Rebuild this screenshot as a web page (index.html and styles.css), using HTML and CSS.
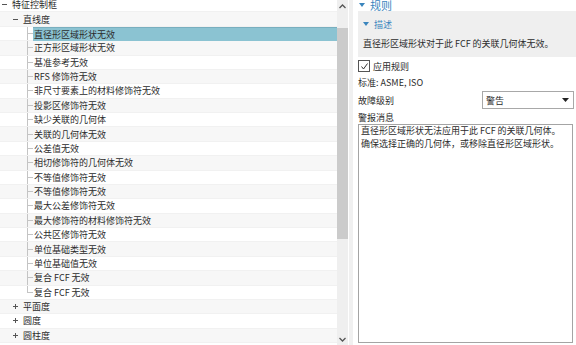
FILE: index.html
```html
<!DOCTYPE html>
<html>
<head>
  <meta charset="UTF-8">
  <title>规则</title>
  <link rel="stylesheet" href="styles.css">
</head>
<body>
  <div class="app">
    <div class="tree-pane">
      <div class="tree">
        <div class="row lvl0"><span class="toggle"><svg width="7" height="7"><line x1="1" y1="3.5" x2="6" y2="3.5"/></svg></span><span class="label">特征控制框</span></div>
        <div class="row lvl1"><span class="toggle"><svg width="7" height="7"><line x1="1" y1="3.5" x2="6" y2="3.5"/></svg></span><span class="label">直线度</span></div>
        <div class="row lvl2 selected"><span class="branch"></span><span class="label">直径形区域形状无效</span></div>
        <div class="row lvl2"><span class="branch"></span><span class="label">正方形区域形状无效</span></div>
        <div class="row lvl2"><span class="branch"></span><span class="label">基准参考无效</span></div>
        <div class="row lvl2"><span class="branch"></span><span class="label">RFS 修饰符无效</span></div>
        <div class="row lvl2"><span class="branch"></span><span class="label">非尺寸要素上的材料修饰符无效</span></div>
        <div class="row lvl2"><span class="branch"></span><span class="label">投影区修饰符无效</span></div>
        <div class="row lvl2"><span class="branch"></span><span class="label">缺少关联的几何体</span></div>
        <div class="row lvl2"><span class="branch"></span><span class="label">关联的几何体无效</span></div>
        <div class="row lvl2"><span class="branch"></span><span class="label">公差值无效</span></div>
        <div class="row lvl2"><span class="branch"></span><span class="label">相切修饰符的几何体无效</span></div>
        <div class="row lvl2"><span class="branch"></span><span class="label">不等值修饰符无效</span></div>
        <div class="row lvl2"><span class="branch"></span><span class="label">不等值修饰符无效</span></div>
        <div class="row lvl2"><span class="branch"></span><span class="label">最大公差修饰符无效</span></div>
        <div class="row lvl2"><span class="branch"></span><span class="label">最大修饰符的材料修饰符无效</span></div>
        <div class="row lvl2"><span class="branch"></span><span class="label">公共区修饰符无效</span></div>
        <div class="row lvl2"><span class="branch"></span><span class="label">单位基础类型无效</span></div>
        <div class="row lvl2"><span class="branch"></span><span class="label">单位基础值无效</span></div>
        <div class="row lvl2"><span class="branch"></span><span class="label">复合 FCF 无效</span></div>
        <div class="row lvl2 last"><span class="branch"></span><span class="label">复合 FCF 无效</span></div>
        <div class="row lvl1"><span class="toggle"><svg width="7" height="7"><line x1="1" y1="3.5" x2="6" y2="3.5"/><line x1="3.5" y1="1" x2="3.5" y2="6"/></svg></span><span class="label">平面度</span></div>
        <div class="row lvl1"><span class="toggle"><svg width="7" height="7"><line x1="1" y1="3.5" x2="6" y2="3.5"/><line x1="3.5" y1="1" x2="3.5" y2="6"/></svg></span><span class="label">圆度</span></div>
        <div class="row lvl1"><span class="toggle"><svg width="7" height="7"><line x1="1" y1="3.5" x2="6" y2="3.5"/><line x1="3.5" y1="1" x2="3.5" y2="6"/></svg></span><span class="label">圆柱度</span></div>
      </div>
      <div class="scrollbar">
        <div class="arrow"><svg width="9" height="6"><polyline points="1.5,5 4.5,2 7.5,5"/></svg></div>
        <div class="track"><div class="thumb"></div></div>
        <div class="arrow"><svg width="9" height="6"><polyline points="1.5,1 4.5,4 7.5,1"/></svg></div>
      </div>
    </div>
    <div class="splitter"></div>
    <div class="rule-pane">
      <div class="rule-title"><svg class="caret" width="6" height="4"><polygon points="0,0 6,0 3,4"/></svg>规则</div>
      <div class="desc-box">
        <div class="desc-title"><svg class="caret" width="6" height="4"><polygon points="0,0 6,0 3,4"/></svg>描述</div>
        <div class="desc-text">直径形区域形状对于此 FCF 的关联几何体无效。</div>
      </div>
      <div class="field check-row">
        <span class="checkbox"><svg width="9" height="9"><polyline points="1.5,4.5 3.5,7 7.5,1.5"/></svg></span>
        <span>应用规则</span>
      </div>
      <div class="field">标准: ASME, ISO</div>
      <div class="field level-row">
        <span>故障级别</span>
        <div class="select"><span>警告</span><svg width="7" height="4"><polygon points="0,0 7,0 3.5,4"/></svg></div>
      </div>
      <div class="field">警报消息</div>
      <div class="message">直径形区域形状无法应用于此 FCF 的关联几何体。<br>确保选择正确的几何体，或移除直径形区域形状。</div>
    </div>
  </div>
</body>
</html>
```

FILE: styles.css
```css
body {
  margin: 0;
  font-family: "Noto Sans CJK SC", "Liberation Sans", sans-serif;
  font-size: 9px;
  color: #2b2b2b;
  background-color: white;
  overflow: hidden;
}
.app {
  display: flex;
  height: 345px;
  width: 576px;
  overflow: hidden;
}
.tree-pane {
  display: flex;
  width: 348px;
  flex-shrink: 0;
}
.tree {
  width: 337px;
  margin-top: -2px;
}
.row {
  display: flex;
  align-items: stretch;
  height: 14.375px;
  box-sizing: border-box;
  border-bottom: 1px solid #f1f1f1;
  background-color: white;
}
.row:nth-child(even) {
  background-color: #f7f7f7;
}
.label {
  display: flex;
  align-items: center;
  flex: 1;
  padding-left: 1px;
  white-space: nowrap;
}
.toggle {
  display: flex;
  align-items: center;
  width: 10px;
}
.toggle svg {
  stroke: #555;
  stroke-width: 1;
}
.lvl0 {
  padding-left: 1px;
}
.lvl1 {
  padding-left: 12px;
}
.lvl2 {
  padding-left: 27px;
}
.branch {
  width: 6px;
  background:
    linear-gradient(#c4c4c4, #c4c4c4) 0 0 / 1px 100% no-repeat,
    linear-gradient(#c4c4c4, #c4c4c4) 0 50% / 6px 1px no-repeat;
}
.last .branch {
  background:
    linear-gradient(#c4c4c4, #c4c4c4) 0 0 / 1px 50% no-repeat,
    linear-gradient(#c4c4c4, #c4c4c4) 0 50% / 6px 1px no-repeat;
}
.selected .label {
  background-color: #8bc3d2;
  border-top: 1px solid #79afbf;
  margin-bottom: -1px;
}
.scrollbar {
  display: flex;
  flex-direction: column;
  width: 11px;
  background-color: #efefef;
}
.arrow {
  display: flex;
  align-items: center;
  justify-content: center;
  height: 11px;
}
.arrow svg {
  fill: none;
  stroke: #555;
  stroke-width: 1.3;
}
.track {
  flex: 1;
  padding-top: 17px;
}
.thumb {
  height: 211px;
  background-color: #cbcbcb;
}
.splitter {
  width: 4px;
  margin-left: 1px;
  background-color: #f0f0f0;
  flex-shrink: 0;
}
.rule-pane {
  flex: 1;
  padding-left: 5px;
  padding-right: 2px;
  display: flex;
  flex-direction: column;
}
.caret {
  fill: #3a85bd;
  margin-right: 5px;
}
.rule-title {
  display: flex;
  align-items: center;
  height: 12px;
  margin-top: -1px;
  padding-left: 1px;
  font-size: 11px;
  color: #3a85bd;
}
.desc-box {
  background-color: #efefef;
  height: 46px;
  margin-right: -2px;
  padding-left: 5px;
}
.desc-title {
  display: flex;
  align-items: center;
  height: 12px;
  margin-top: 7px;
  color: #3a85bd;
}
.desc-text {
  margin-top: 7px;
  white-space: nowrap;
}
.field {
  display: flex;
  align-items: center;
  height: 16px;
}
.check-row {
  height: 16px;
  margin-top: 1px;
}
.checkbox {
  display: flex;
  align-items: center;
  justify-content: center;
  width: 10px;
  height: 10px;
  border: 1px solid #555;
  margin-right: 3px;
  background-color: white;
}
.checkbox svg {
  fill: none;
  stroke: #333;
  stroke-width: 1;
}
.level-row {
  justify-content: space-between;
  height: 18px;
  margin-top: 1px;
}
.select {
  display: flex;
  align-items: center;
  justify-content: space-between;
  width: 92px;
  height: 18px;
  box-sizing: border-box;
  border: 1px solid #a8a8a8;
  padding: 0 4px 0 3px;
  background-color: white;
}
.select svg {
  fill: #222;
}
.message {
  height: 219px;
  margin-top: -1px;
  margin-right: 1px;
  box-sizing: border-box;
  border: 1px solid #a4a4a4;
  padding: 0 2px;
  line-height: 12.5px;
  white-space: nowrap;
}
```
